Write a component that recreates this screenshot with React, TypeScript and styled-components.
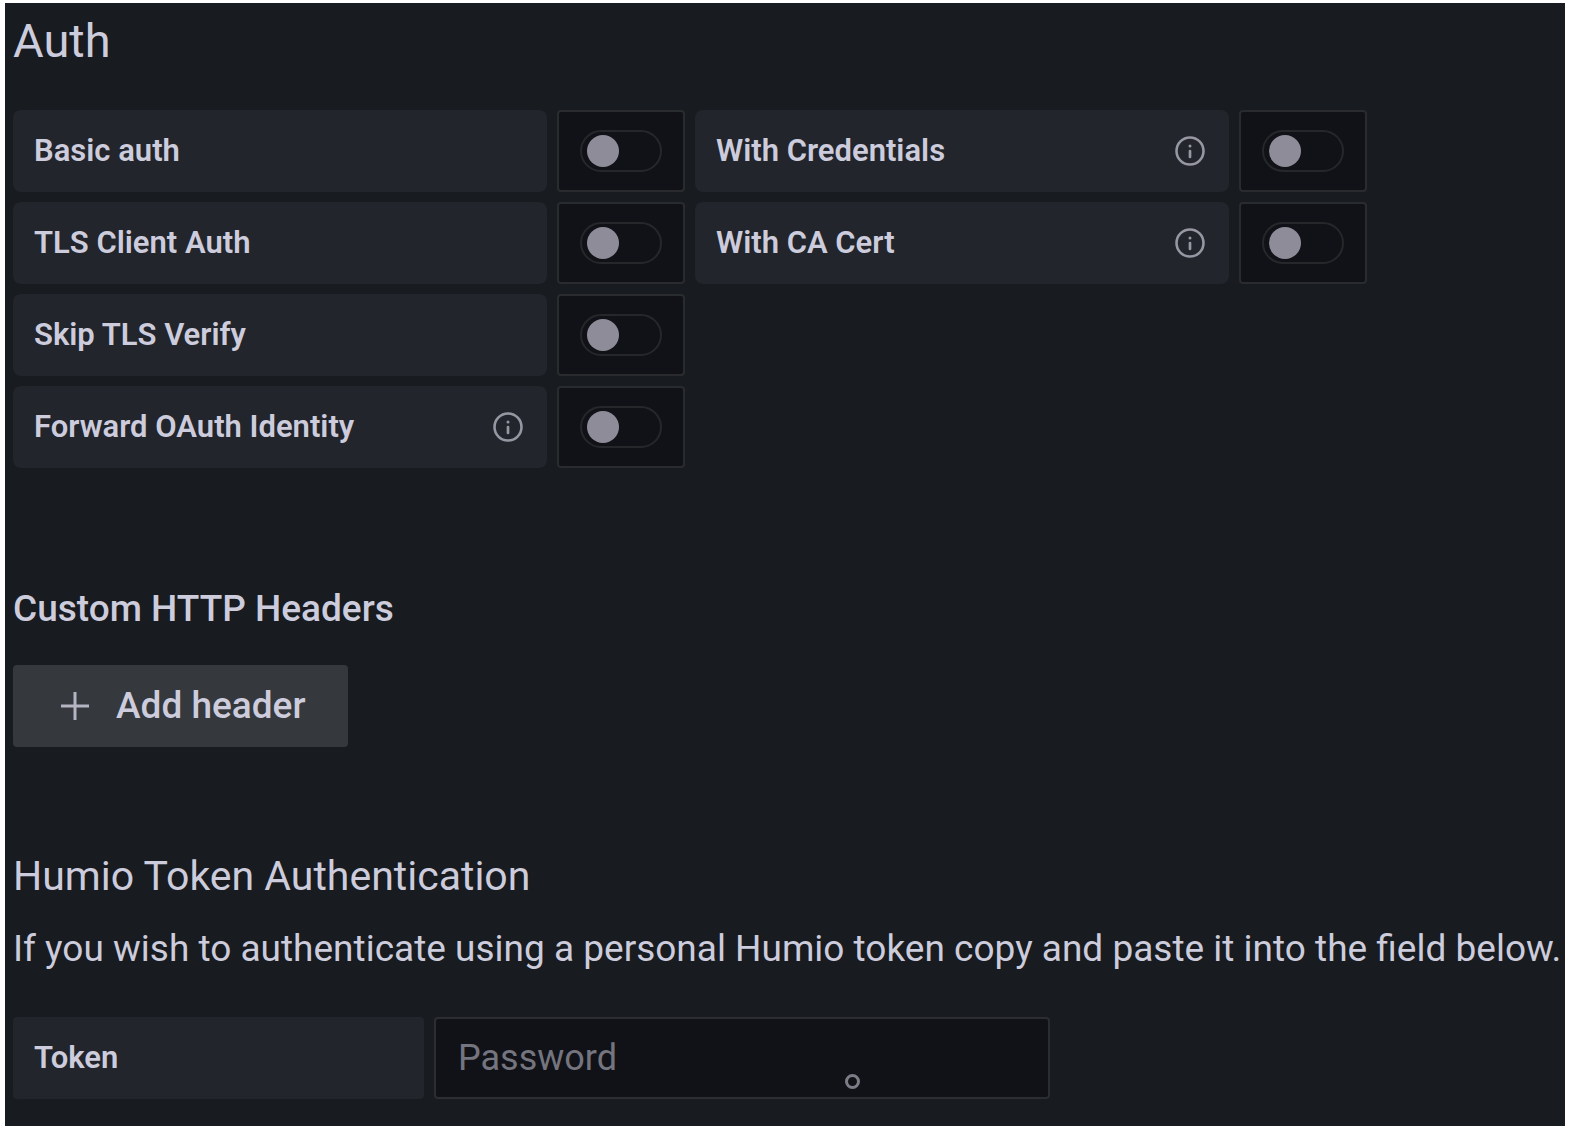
import React from "react";
import styled, { createGlobalStyle } from "styled-components";

const GlobalStyle = createGlobalStyle`
  *, *::before, *::after { box-sizing: border-box; }
  body {
    margin: 0;
    background: #ffffff;
    font-family: Roboto, "Liberation Sans", sans-serif;
  }
`;

const Panel = styled.main`
  margin: 3px 7px 4px 5px;
  padding: 8px 0 27px 8px;
  background: #181b1f;
  color: #ccccdc;
`;

const PageTitle = styled.h1`
  margin: 0 0 39px;
  font-size: 47px;
  font-weight: 400;
  line-height: 60px;
`;

const SettingsGrid = styled.div`
  display: grid;
  grid-template-columns: repeat(2, max-content);
  gap: 10px;
`;

const SettingRow = styled.div<{ $firstColumn?: boolean }>`
  display: flex;
  gap: 10px;
  ${(p) => p.$firstColumn && "grid-column: 1;"}
`;

const FieldLabel = styled.label<{ $width: number; $radius: number }>`
  display: flex;
  align-items: center;
  justify-content: space-between;
  width: ${(p) => p.$width}px;
  height: 82px;
  padding: 0 21px;
  border-radius: ${(p) => p.$radius}px;
  background: #22252b;
  font-size: 31px;
  font-weight: 600;
  line-height: 40px;
`;

const SwitchBox = styled.div`
  display: flex;
  align-items: center;
  justify-content: center;
  width: 128px;
  height: 82px;
  border: 2px solid #2a2b2f;
  border-radius: 4px;
  background: #111217;
`;

const Switch = styled.input`
  appearance: none;
  display: flex;
  align-items: center;
  width: 82px;
  height: 42px;
  margin: 0;
  padding: 0 5px;
  border: 2px solid #26272b;
  border-radius: 21px;
  background: #111217;
  cursor: pointer;

  &::before {
    content: "";
    width: 32px;
    height: 32px;
    border-radius: 50%;
    background: #8e8c99;
  }

  &:checked {
    justify-content: flex-end;
  }
`;

const InfoSvg = styled.svg`
  width: 36px;
  height: 36px;
  color: #9697a3;
`;

const HeadersSection = styled.section`
  margin-top: 118px;
`;

const SubTitle = styled.h2`
  margin: 0 0 33px;
  font-size: 37px;
  font-weight: 500;
  line-height: 46px;
`;

const AddButton = styled.button`
  display: flex;
  align-items: center;
  gap: 23px;
  height: 82px;
  padding: 0 42px 0 44px;
  border: 0;
  border-radius: 4px;
  background: #35383d;
  color: inherit;
  font-family: inherit;
  font-size: 37px;
  font-weight: 500;
  line-height: 46px;
  cursor: pointer;
`;

const PlusSvg = styled.svg`
  width: 36px;
  height: 36px;
`;

const TokenSection = styled.section`
  margin-top: 104px;
`;

const SectionTitle = styled.h2`
  margin: 0 0 25px;
  font-size: 41px;
  font-weight: 400;
  line-height: 50px;
`;

const Description = styled.p`
  margin: 0 0 45px;
  font-size: 37px;
  line-height: 46px;
`;

const TokenRow = styled.div`
  display: flex;
  gap: 10px;
`;

const InputWrap = styled.div`
  position: relative;
  width: 616px;
`;

const TokenInput = styled.input`
  display: block;
  width: 100%;
  height: 82px;
  padding: 0 22px;
  border: 2px solid #2c2d32;
  border-radius: 4px;
  background: #111217;
  color: #ccccdc;
  font-family: inherit;
  font-size: 36px;
  outline: none;

  &::placeholder {
    color: #74757f;
    opacity: 1;
  }
`;

const PointerRing = styled.span`
  position: absolute;
  right: 190px;
  bottom: 10px;
  width: 15px;
  height: 15px;
  border: 3px solid #7c7c86;
  border-radius: 50%;
  pointer-events: none;
`;

const InfoIcon = () => (
  <InfoSvg viewBox="0 0 24 24" fill="none" aria-hidden="true">
    <circle cx="12" cy="12" r="9" stroke="currentColor" strokeWidth="1.7" />
    <circle cx="12" cy="8.6" r="1" fill="currentColor" />
    <path d="M12 12v4" stroke="currentColor" strokeWidth="1.8" strokeLinecap="round" />
  </InfoSvg>
);

type Setting = { id: string; label: string; info?: boolean; firstColumn?: boolean };

const settings: Setting[] = [
  { id: "basic-auth", label: "Basic auth" },
  { id: "with-credentials", label: "With Credentials", info: true },
  { id: "tls-client-auth", label: "TLS Client Auth" },
  { id: "with-ca-cert", label: "With CA Cert", info: true },
  { id: "skip-tls-verify", label: "Skip TLS Verify", firstColumn: true },
  { id: "forward-oauth", label: "Forward OAuth Identity", info: true, firstColumn: true },
];

export default function App() {
  return (
    <>
      <GlobalStyle />
      <Panel>
        <PageTitle>Auth</PageTitle>
        <SettingsGrid>
          {settings.map((s) => (
            <SettingRow key={s.id} $firstColumn={s.firstColumn}>
              <FieldLabel htmlFor={s.id} $width={534} $radius={8}>
                {s.label}
                {s.info && <InfoIcon />}
              </FieldLabel>
              <SwitchBox>
                <Switch type="checkbox" role="switch" id={s.id} />
              </SwitchBox>
            </SettingRow>
          ))}
        </SettingsGrid>

        <HeadersSection>
          <SubTitle>Custom HTTP Headers</SubTitle>
          <AddButton type="button">
            <PlusSvg viewBox="0 0 36 36" fill="none" aria-hidden="true">
              <path d="M18 4v28M4 18h28" stroke="#b4b4c2" strokeWidth="3" />
            </PlusSvg>
            Add header
          </AddButton>
        </HeadersSection>

        <TokenSection>
          <SectionTitle>Humio Token Authentication</SectionTitle>
          <Description>
            If you wish to authenticate using a personal Humio token copy and paste it into the field below.
          </Description>
          <TokenRow>
            <FieldLabel htmlFor="token" $width={411} $radius={4}>
              Token
            </FieldLabel>
            <InputWrap>
              <TokenInput id="token" type="password" placeholder="Password" />
              <PointerRing />
            </InputWrap>
          </TokenRow>
        </TokenSection>
      </Panel>
    </>
  );
}
